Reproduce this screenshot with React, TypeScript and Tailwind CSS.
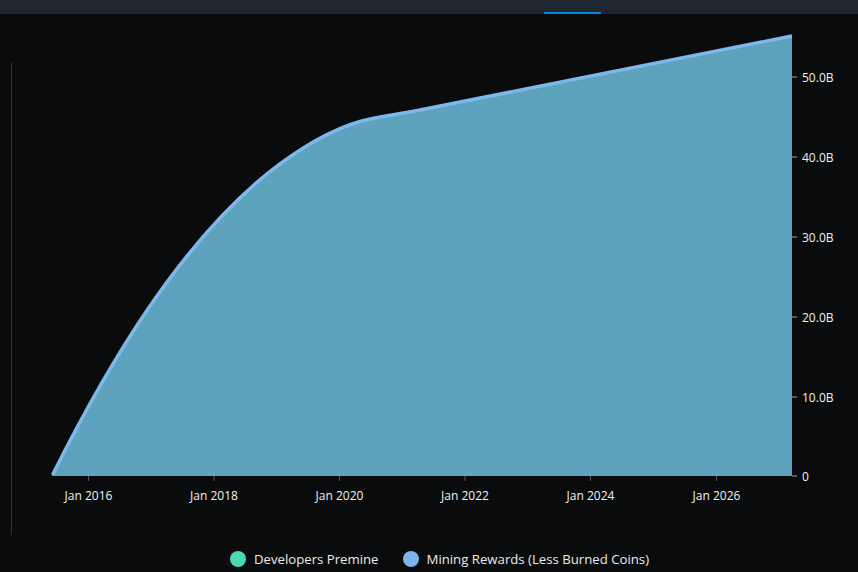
const xTicks = [
  { x: 88.5, label: "Jan 2016" },
  { x: 214, label: "Jan 2018" },
  { x: 339.5, label: "Jan 2020" },
  { x: 465, label: "Jan 2022" },
  { x: 590.5, label: "Jan 2024" },
  { x: 716.5, label: "Jan 2026" },
];

const yTicks = [
  { y: 77, label: "50.0B" },
  { y: 157, label: "40.0B" },
  { y: 237, label: "30.0B" },
  { y: 317, label: "20.0B" },
  { y: 397, label: "10.0B" },
  { y: 476, label: "0" },
];

// smooth part of the supply curve, then a straight run to the last point
const curve =
  "M52.5 475 C80 420 115 357 150 306 C185 255 225 208 268 173 C300 148 330 130 360 121.5 C372 118 385 116.5 420 110 L792 36";

function Chart() {
  return (
    <svg width="858" height="522" viewBox="0 14 858 522" className="block">
      <line x1="11.5" y1="62" x2="11.5" y2="535" stroke="#2e3136" />
      <path d={`${curve} L792 476 L52 476 Z`} fill="#5ea3bd" />
      <path d={curve} fill="none" stroke="#7cb8ec" strokeWidth="3.5" />
      {xTicks.map((t) => (
        <g key={t.label}>
          <line x1={t.x} y1="476" x2={t.x} y2="481" stroke="#55585f" />
          <text x={t.x} y="500" textAnchor="middle" fontSize="12" fill="#f2f2f2">
            {t.label}
          </text>
        </g>
      ))}
      {yTicks.map((t) => (
        <g key={t.label}>
          <line x1="792" y1={t.y} x2="797" y2={t.y} stroke="#55585f" strokeWidth="2" />
          <text x="802" y={t.y + 4.5} fontSize="12" fill="#f2f2f2">
            {t.label}
          </text>
        </g>
      ))}
    </svg>
  );
}

export default function App() {
  return (
    <div className="h-[572px] w-[858px] overflow-hidden bg-[#090b0d] font-['Open_Sans',sans-serif]">
      <div className="flex h-[14px] items-end bg-[#1f2730] pl-[544px]">
        <div className="h-[2px] w-[57px] bg-[#0088e0]" />
      </div>
      <Chart />
      <div className="mt-[15px] flex items-center justify-center gap-6 pl-[21px] text-[13.2px] leading-4 text-[#ececec]">
        <div className="flex items-center gap-2">
          <span className="h-4 w-4 rounded-full bg-[#48dab4]" />
          <span>Developers Premine</span>
        </div>
        <div className="flex items-center gap-2">
          <span className="h-4 w-4 rounded-full bg-[#7cb5ec]" />
          <span>Mining Rewards (Less Burned Coins)</span>
        </div>
      </div>
    </div>
  );
}
